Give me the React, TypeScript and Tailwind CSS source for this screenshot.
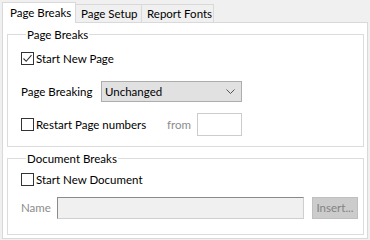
import React from "react";

function Check({ checked }: { checked?: boolean }) {
  return (
    <div className="w-[13px] h-[13px] border border-[#333333] bg-white flex items-center justify-center shrink-0">
      {checked && (
        <svg width="11" height="11" viewBox="0 0 11 11">
          <path d="M1.5 5.5 L4.2 8.3 L9.5 2.2" fill="none" stroke="#333333" strokeWidth="1.1" />
        </svg>
      )}
    </div>
  );
}

export default function App() {
  return (
    <div
      className="w-[370px] h-[240px] bg-[#f0f0f0] pt-[2px] pl-[2px] text-[11.5px] leading-[16px] text-black overflow-hidden whitespace-nowrap"
      style={{ fontFamily: 'Lato, "Noto Sans", sans-serif' }}
    >
      <div className="flex items-end h-[21px] relative z-10 -mb-[1px]">
        <div className="w-[74px] h-[21px] bg-white border border-b-0 border-[#d9d9d9] pl-[7px] pt-[2px] shrink-0">
          Page Breaks
        </div>
        <div className="w-[66px] h-[19px] border border-l-0 border-[#d9d9d9] pl-[5px] pt-[1px] shrink-0">
          Page Setup
        </div>
        <div className="w-[72px] h-[19px] border border-l-0 border-[#d9d9d9] pl-[5px] pt-[1px] shrink-0">
          Report Fonts
        </div>
      </div>
      <div className="w-[366px] h-[217px] bg-white border border-[#d9d9d9] pl-[4px]">
        <fieldset className="w-[357px] mt-[3px] border border-[#dcdcdc] pl-[13px] pb-[10px]">
          <legend className="ml-[5px] px-[1px] leading-[17px]">Page Breaks</legend>
          <div className="mt-[9px] flex items-center gap-[2px] h-[13px]">
            <Check checked />
            <span>Start New Page</span>
          </div>
          <div className="mt-[16px] flex items-center h-[21px]">
            <span className="w-[80px] shrink-0">Page Breaking</span>
            <div className="w-[141px] h-[21px] bg-[#e1e1e1] border border-[#adadad] flex items-center justify-between pl-[3px] pr-[6px] shrink-0">
              <span>Unchanged</span>
              <svg width="9" height="5" viewBox="0 0 9 5">
                <path d="M0.5 0.5 L4.5 4.5 L8.5 0.5" fill="none" stroke="#555555" strokeWidth="1" />
              </svg>
            </div>
          </div>
          <div className="mt-[11px] flex items-center h-[23px]">
            <Check />
            <span className="ml-[2px] w-[131px] shrink-0">Restart Page numbers</span>
            <span className="text-[#8c8c8c] w-[30px] shrink-0">from</span>
            <div className="w-[45px] h-[23px] border border-[#cccccc] bg-white shrink-0" />
          </div>
        </fieldset>
        <fieldset className="w-[357px] mt-[3px] border border-[#dcdcdc] pl-[13px] pb-[15px]">
          <legend className="ml-[5px] px-[1px] leading-[17px]">Document Breaks</legend>
          <div className="mt-[6px] flex items-center gap-[2px] h-[13px]">
            <Check />
            <span>Start New Document</span>
          </div>
          <div className="mt-[11px] flex items-center h-[22px]">
            <span className="w-[36px] text-[#8c8c8c] shrink-0">Name</span>
            <div className="w-[247px] h-[22px] bg-[#f0f0f0] border border-[#cfcfcf] border-t-[#8a8a8a] border-l-[#8a8a8a] shrink-0" />
            <div className="ml-[8px] w-[46px] h-[22px] bg-[#cccccc] border border-[#bfbfbf] text-[#838383] flex items-center justify-center shrink-0">
              Insert...
            </div>
          </div>
        </fieldset>
      </div>
    </div>
  );
}
